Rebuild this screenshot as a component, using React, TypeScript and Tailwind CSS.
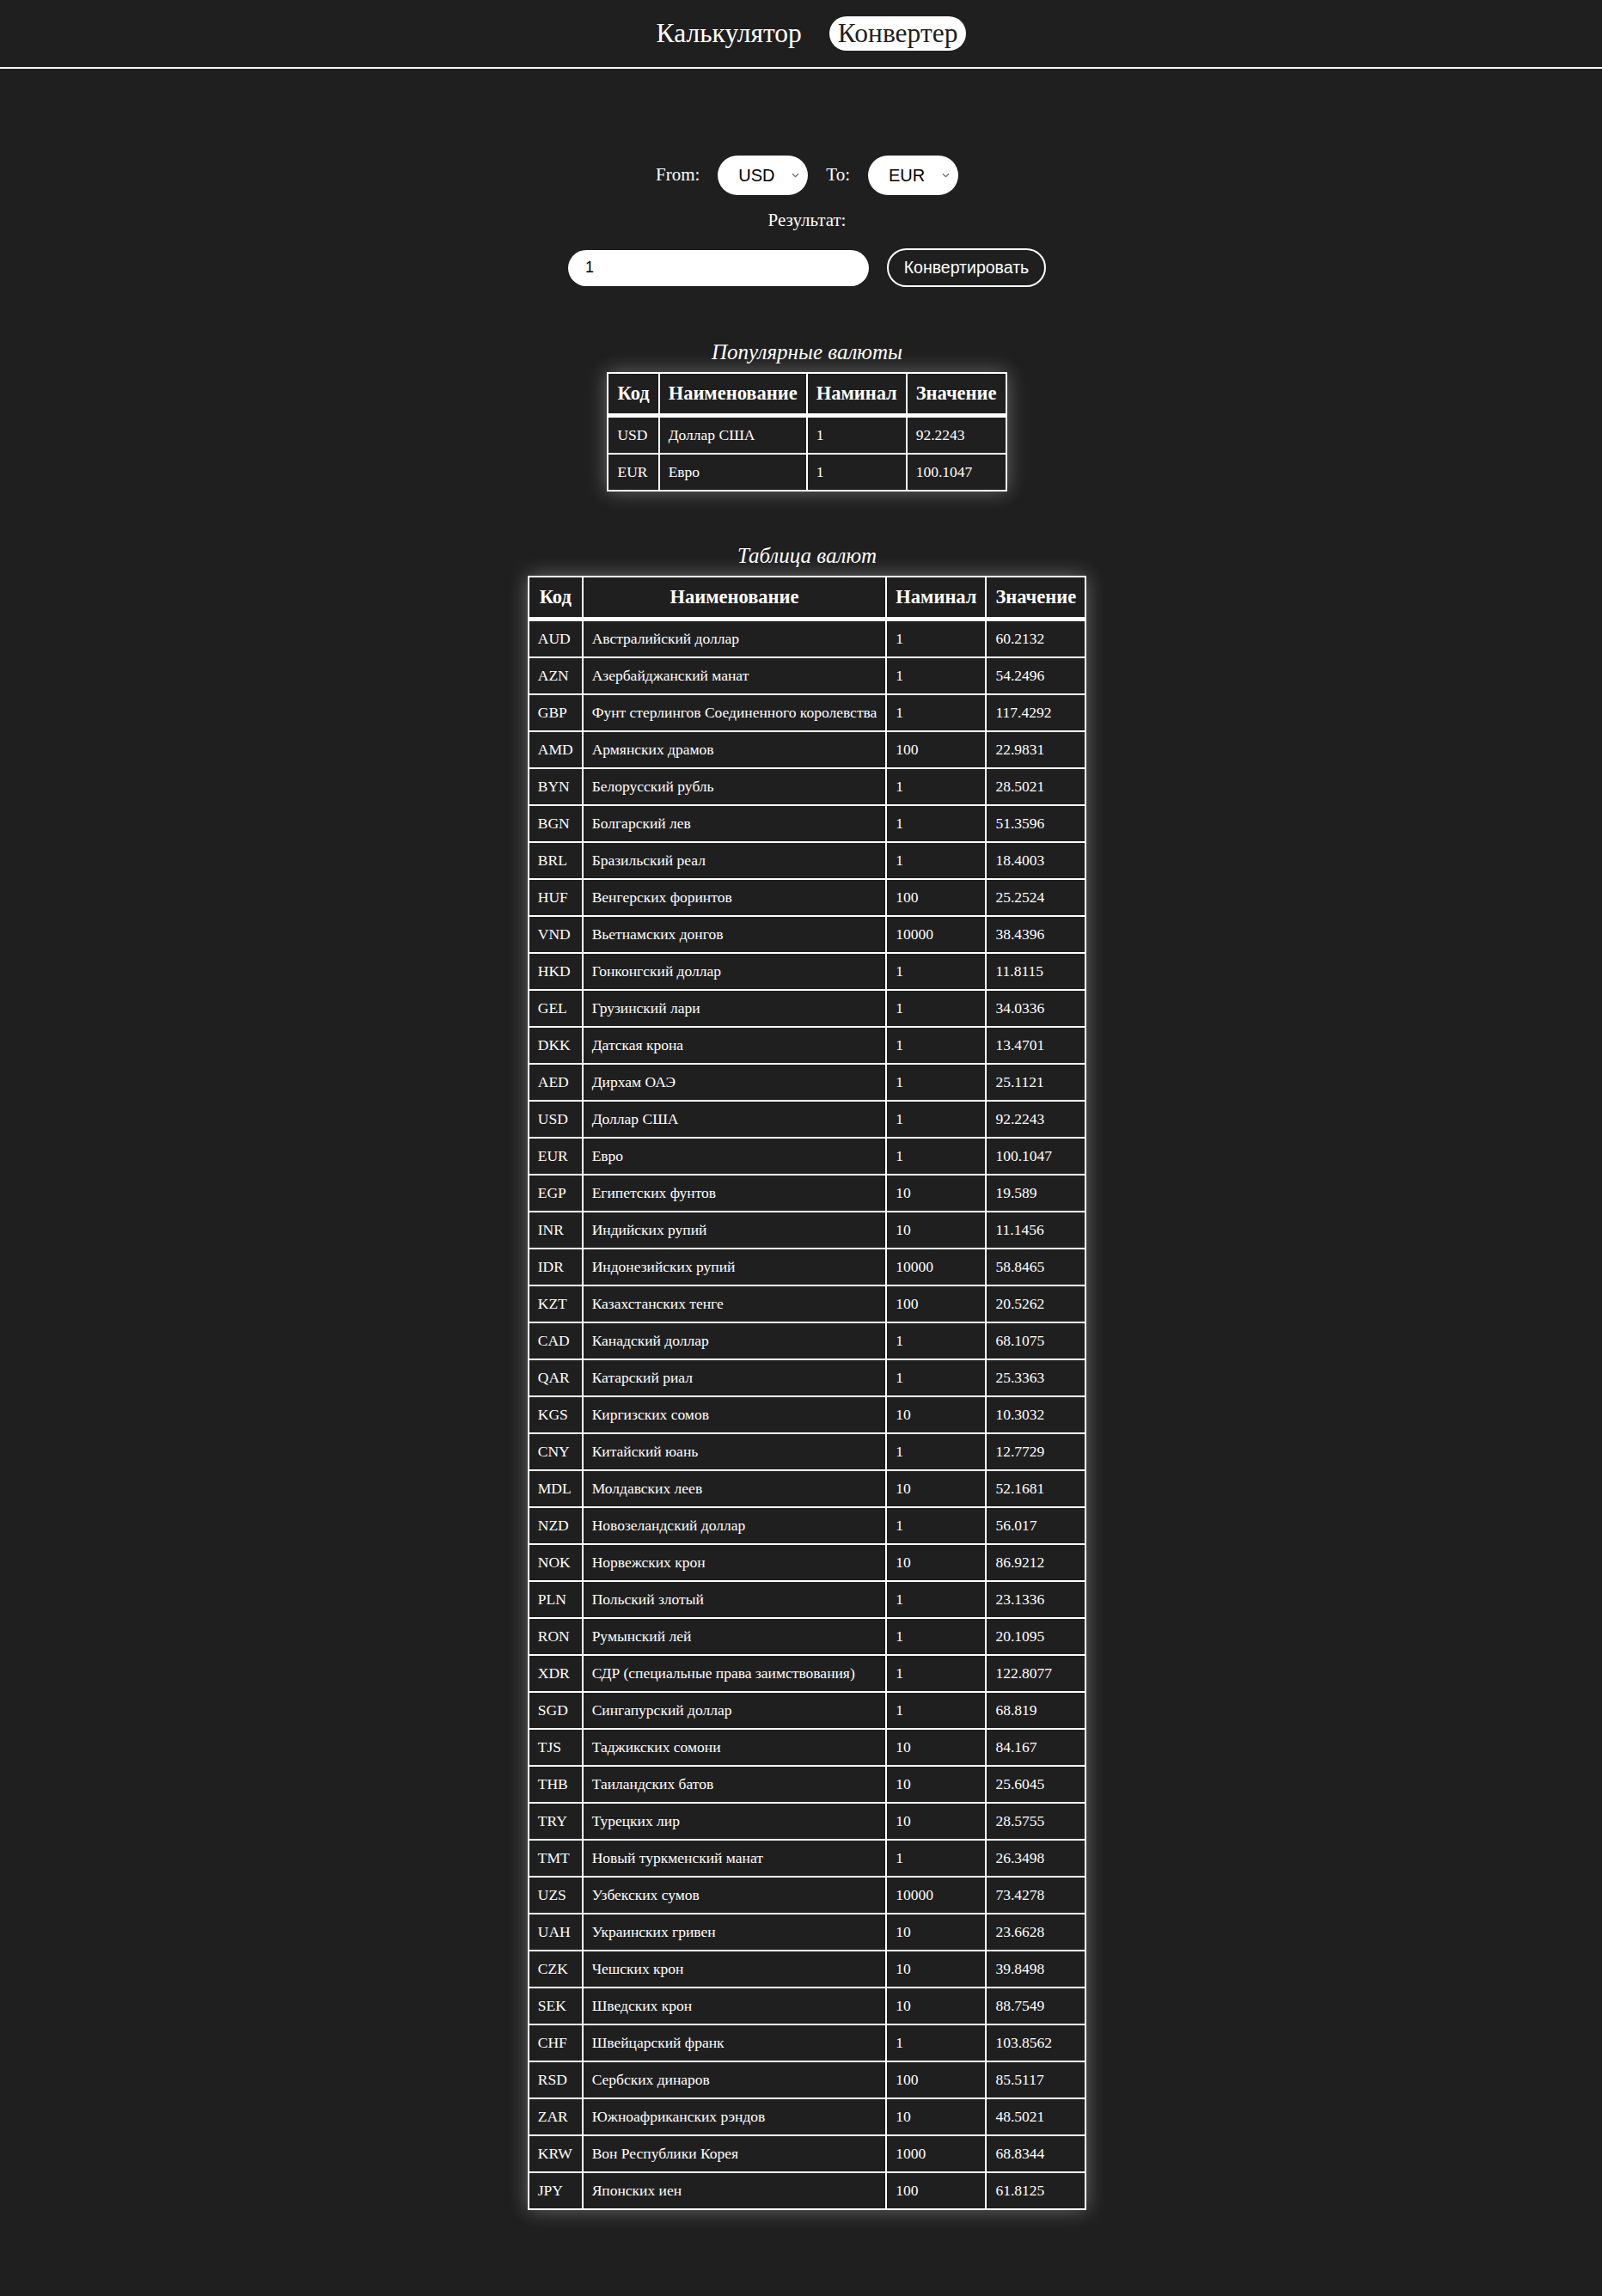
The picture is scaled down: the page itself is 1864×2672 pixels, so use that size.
import { useState } from 'react';

type Currency = {
    code: string;
    name: string;
    nominal: number;
    value: string;
};

const currencies: Currency[] = [
    { code: 'AUD', name: 'Австралийский доллар', nominal: 1, value: '60.2132' },
    { code: 'AZN', name: 'Азербайджанский манат', nominal: 1, value: '54.2496' },
    { code: 'GBP', name: 'Фунт стерлингов Соединенного королевства', nominal: 1, value: '117.4292' },
    { code: 'AMD', name: 'Армянских драмов', nominal: 100, value: '22.9831' },
    { code: 'BYN', name: 'Белорусский рубль', nominal: 1, value: '28.5021' },
    { code: 'BGN', name: 'Болгарский лев', nominal: 1, value: '51.3596' },
    { code: 'BRL', name: 'Бразильский реал', nominal: 1, value: '18.4003' },
    { code: 'HUF', name: 'Венгерских форинтов', nominal: 100, value: '25.2524' },
    { code: 'VND', name: 'Вьетнамских донгов', nominal: 10000, value: '38.4396' },
    { code: 'HKD', name: 'Гонконгский доллар', nominal: 1, value: '11.8115' },
    { code: 'GEL', name: 'Грузинский лари', nominal: 1, value: '34.0336' },
    { code: 'DKK', name: 'Датская крона', nominal: 1, value: '13.4701' },
    { code: 'AED', name: 'Дирхам ОАЭ', nominal: 1, value: '25.1121' },
    { code: 'USD', name: 'Доллар США', nominal: 1, value: '92.2243' },
    { code: 'EUR', name: 'Евро', nominal: 1, value: '100.1047' },
    { code: 'EGP', name: 'Египетских фунтов', nominal: 10, value: '19.589' },
    { code: 'INR', name: 'Индийских рупий', nominal: 10, value: '11.1456' },
    { code: 'IDR', name: 'Индонезийских рупий', nominal: 10000, value: '58.8465' },
    { code: 'KZT', name: 'Казахстанских тенге', nominal: 100, value: '20.5262' },
    { code: 'CAD', name: 'Канадский доллар', nominal: 1, value: '68.1075' },
    { code: 'QAR', name: 'Катарский риал', nominal: 1, value: '25.3363' },
    { code: 'KGS', name: 'Киргизских сомов', nominal: 10, value: '10.3032' },
    { code: 'CNY', name: 'Китайский юань', nominal: 1, value: '12.7729' },
    { code: 'MDL', name: 'Молдавских леев', nominal: 10, value: '52.1681' },
    { code: 'NZD', name: 'Новозеландский доллар', nominal: 1, value: '56.017' },
    { code: 'NOK', name: 'Норвежских крон', nominal: 10, value: '86.9212' },
    { code: 'PLN', name: 'Польский злотый', nominal: 1, value: '23.1336' },
    { code: 'RON', name: 'Румынский лей', nominal: 1, value: '20.1095' },
    { code: 'XDR', name: 'СДР (специальные права заимствования)', nominal: 1, value: '122.8077' },
    { code: 'SGD', name: 'Сингапурский доллар', nominal: 1, value: '68.819' },
    { code: 'TJS', name: 'Таджикских сомони', nominal: 10, value: '84.167' },
    { code: 'THB', name: 'Таиландских батов', nominal: 10, value: '25.6045' },
    { code: 'TRY', name: 'Турецких лир', nominal: 10, value: '28.5755' },
    { code: 'TMT', name: 'Новый туркменский манат', nominal: 1, value: '26.3498' },
    { code: 'UZS', name: 'Узбекских сумов', nominal: 10000, value: '73.4278' },
    { code: 'UAH', name: 'Украинских гривен', nominal: 10, value: '23.6628' },
    { code: 'CZK', name: 'Чешских крон', nominal: 10, value: '39.8498' },
    { code: 'SEK', name: 'Шведских крон', nominal: 10, value: '88.7549' },
    { code: 'CHF', name: 'Швейцарский франк', nominal: 1, value: '103.8562' },
    { code: 'RSD', name: 'Сербских динаров', nominal: 100, value: '85.5117' },
    { code: 'ZAR', name: 'Южноафриканских рэндов', nominal: 10, value: '48.5021' },
    { code: 'KRW', name: 'Вон Республики Корея', nominal: 1000, value: '68.8344' },
    { code: 'JPY', name: 'Японских иен', nominal: 100, value: '61.8125' },
];

const popular = currencies.filter((c) => c.code === 'USD' || c.code === 'EUR');

const Chevron = () => (
    <svg
        width="9"
        height="6"
        viewBox="0 0 9 6"
        className="pointer-events-none absolute right-[10px] top-1/2 -translate-y-1/2"
    >
        <path d="M1 1.2 L4.5 4.6 L8 1.2" fill="none" stroke="#6b6b6b" strokeWidth="1.3" />
    </svg>
);

const CurrencySelect = ({ value, onChange }: { value: string; onChange: (v: string) => void }) => (
    <div className="relative">
        <select
            value={value}
            onChange={(e) => onChange(e.target.value)}
            className="appearance-none w-[105px] h-[46px] rounded-full bg-white text-black pl-[24px] pr-[20px] text-[20px] font-['Liberation_Sans',Arial,sans-serif] outline-none"
        >
            {currencies.map((c) => (
                <option key={c.code} value={c.code}>
                    {c.code}
                </option>
            ))}
        </select>
        <Chevron />
    </div>
);

const CurrencyTable = ({ title, rows }: { title: string; rows: Currency[] }) => (
    <table className="border-collapse border-2 border-white shadow-[0_0_22px_rgba(255,255,255,0.32)]">
        <caption className="italic text-[25px] leading-[29px] pb-[9px]">{title}</caption>
        <thead>
            <tr>
                <th className="border-2 border-white border-b-[5px] px-[10px] py-[10px] text-[22.5px] leading-[26px] font-bold">Код</th>
                <th className="border-2 border-white border-b-[5px] px-[10px] py-[10px] text-[22.5px] leading-[26px] font-bold">Наименование</th>
                <th className="border-2 border-white border-b-[5px] px-[10px] py-[10px] text-[22.5px] leading-[26px] font-bold">Наминал</th>
                <th className="border-2 border-white border-b-[5px] px-[10px] py-[10px] text-[22.5px] leading-[26px] font-bold">Значение</th>
            </tr>
        </thead>
        <tbody>
            {rows.map((c) => (
                <tr key={c.code}>
                    <td className="border-2 border-white px-[10px] py-[10px] text-[17.5px] leading-[21px]">{c.code}</td>
                    <td className="border-2 border-white px-[10px] py-[10px] text-[17.5px] leading-[21px]">{c.name}</td>
                    <td className="border-2 border-white px-[10px] py-[10px] text-[17.5px] leading-[21px]">{c.nominal}</td>
                    <td className="border-2 border-white px-[10px] py-[10px] text-[17.5px] leading-[21px]">{c.value}</td>
                </tr>
            ))}
        </tbody>
    </table>
);

export default function App() {
    const [from, setFrom] = useState('USD');
    const [to, setTo] = useState('EUR');
    const [amount, setAmount] = useState('1');

    return (
        <div className="min-h-screen bg-[#1f1f1f] text-white font-['Liberation_Serif','Times_New_Roman',serif] pb-[102px]">
            {/* Nav */}
            <nav className="h-[80px] border-b-2 border-white flex items-center justify-center gap-[22px] pl-[14px]">
                <a className="px-[10px] py-[3px] text-[31.5px] leading-[34px] text-white cursor-pointer">Калькулятор</a>
                <a className="px-[10px] py-[3px] text-[31.5px] leading-[34px] bg-white text-[#1f1f1f] rounded-full cursor-pointer">Конвертер</a>
            </nav>

            <main className="flex flex-col items-center pl-[14px]">
                {/* Converter form */}
                <div className="mt-[101px] flex items-center gap-[21px] text-[21px]">
                    <span>From:</span>
                    <CurrencySelect value={from} onChange={setFrom} />
                    <span>To:</span>
                    <CurrencySelect value={to} onChange={setTo} />
                </div>

                <p className="mt-[17px] text-[21px] leading-[24px]">Результат:</p>

                <div className="mt-[21px] flex items-center gap-[21px] font-['Liberation_Sans',Arial,sans-serif]">
                    <input
                        value={amount}
                        onChange={(e) => setAmount(e.target.value)}
                        className="w-[350px] h-[42px] rounded-full bg-white text-black pl-[20px] text-[18px] outline-none"
                    />
                    <button
                        type="button"
                        className="w-[185px] h-[45px] rounded-full border-2 border-white text-white text-[19.5px]"
                    >
                        Конвертировать
                    </button>
                </div>

                <div className="mt-[61px]">
                    <CurrencyTable title="Популярные валюты" rows={popular} />
                </div>

                <div className="mt-[60px]">
                    <CurrencyTable title="Таблица валют" rows={currencies} />
                </div>
            </main>
        </div>
    );
}
